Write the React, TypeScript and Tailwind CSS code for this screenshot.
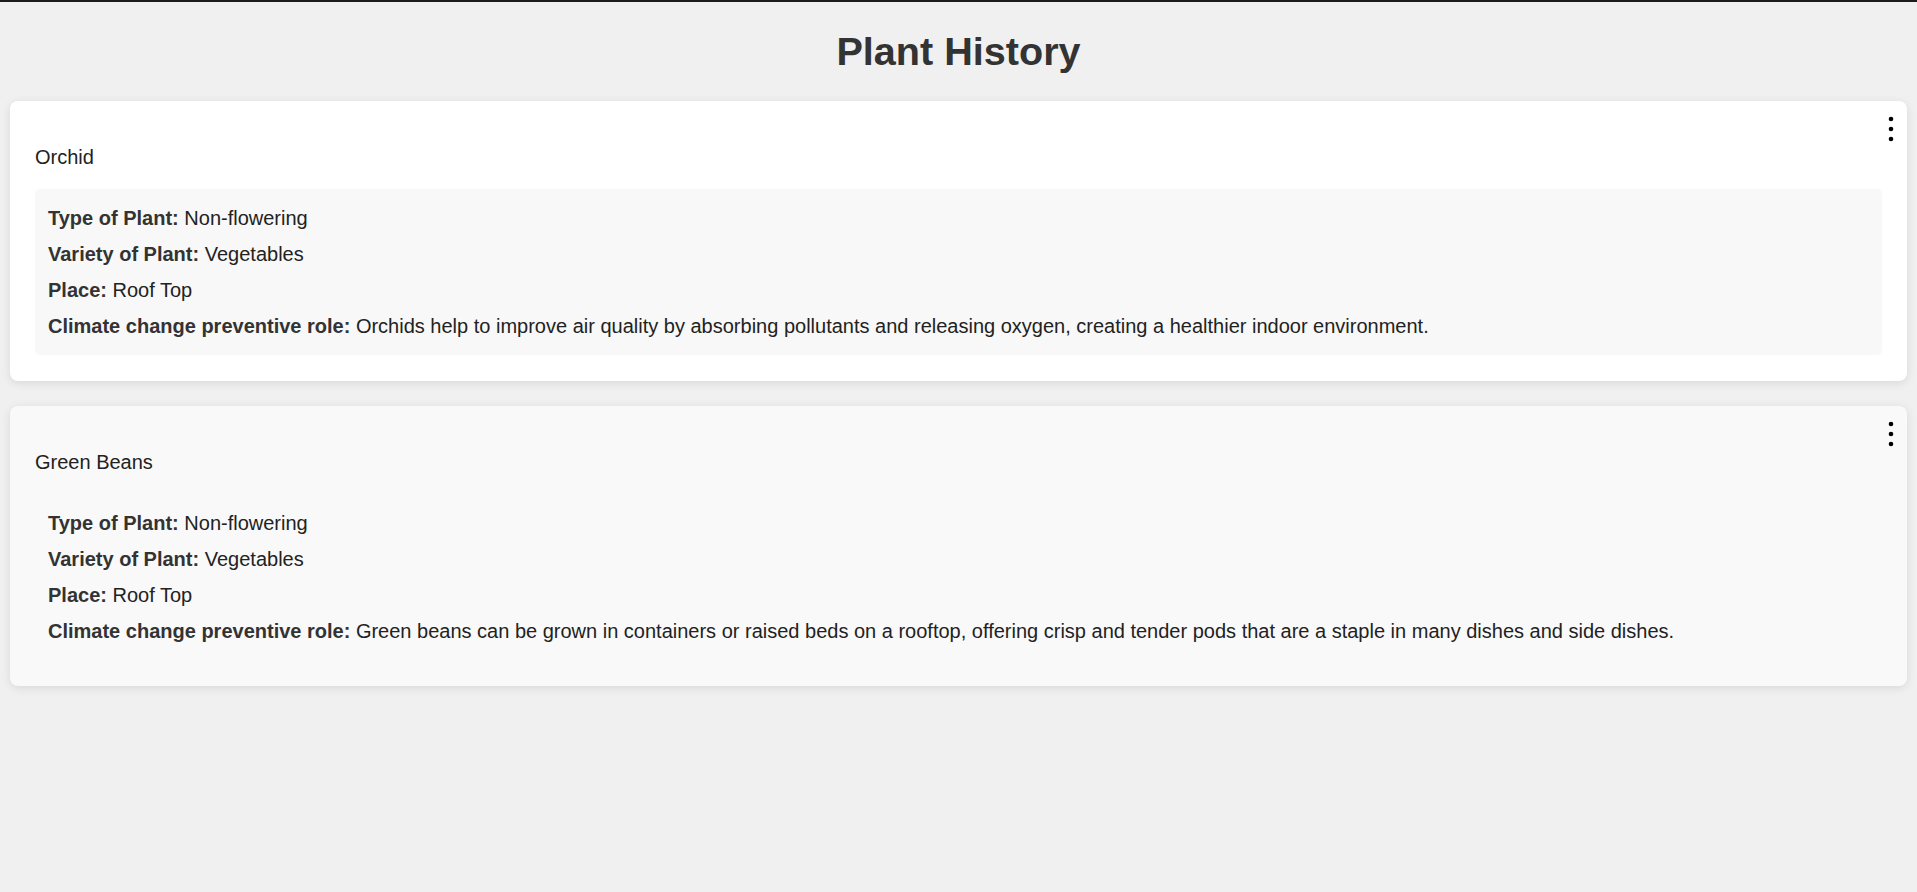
import React from "react";

type Plant = {
  id: number;
  name: string;
  type: string;
  variety: string;
  place: string;
  role: string;
};

const plants: Plant[] = [
  {
    id: 1,
    name: "Orchid",
    type: "Non-flowering",
    variety: "Vegetables",
    place: "Roof Top",
    role: "Orchids help to improve air quality by absorbing pollutants and releasing oxygen, creating a healthier indoor environment.",
  },
  {
    id: 2,
    name: "Green Beans",
    type: "Non-flowering",
    variety: "Vegetables",
    place: "Roof Top",
    role: "Green beans can be grown in containers or raised beds on a rooftop, offering crisp and tender pods that are a staple in many dishes and side dishes.",
  },
];

function MoreDots() {
  return (
    <svg
      width="10"
      height="30"
      viewBox="0 0 10 30"
      className="absolute right-[11px] top-[13px] cursor-pointer"
    >
      <circle cx="5" cy="5" r="2.3" fill="#000" />
      <circle cx="5" cy="15" r="2.3" fill="#000" />
      <circle cx="5" cy="25" r="2.3" fill="#000" />
    </svg>
  );
}

function PlantCard({ plant, hovered }: { plant: Plant; hovered?: boolean }) {
  const rows = [
    { label: "Type of Plant:", value: plant.type },
    { label: "Variety of Plant:", value: plant.variety },
    { label: "Place:", value: plant.place },
    { label: "Climate change preventive role:", value: plant.role },
  ];
  return (
    <div
      className={
        hovered
          ? "relative rounded-lg bg-[#f9f9f9] px-[25px] pt-[45px] pb-[26px] shadow-[0_2px_10px_rgba(0,0,0,0.1)]"
          : "relative rounded-lg bg-white px-[25px] pt-[45px] pb-[26px] shadow-[0_2px_10px_rgba(0,0,0,0.1)]"
      }
    >
      <MoreDots />
      <h3 className="text-[20px] leading-[22px] font-normal text-[#222]">
        {plant.name}
      </h3>
      <div
        className={
          hovered
            ? "mt-[21px] rounded-[5px] bg-[#f9f9f9] px-[13px] py-[11px]"
            : "mt-[21px] rounded-[5px] bg-[#f8f8f8] px-[13px] py-[11px]"
        }
      >
        {rows.map((row) => (
          <p key={row.label} className="text-[20px] leading-[36px] text-[#222]">
            <strong className="font-bold text-[#333]">{row.label}</strong>{" "}
            {row.value}
          </p>
        ))}
      </div>
    </div>
  );
}

export default function App() {
  return (
    <div
      className="min-h-screen border-t-2 border-[#1c1c1c] bg-[#f0f0f0] px-[10px]"
      style={{ fontFamily: '"Liberation Sans", Arial, sans-serif' }}
    >
      <h1 className="pt-[27px] text-center text-[39.6px] leading-[44px] font-bold text-[#333]">
        Plant History
      </h1>
      <div className="mt-[28px] flex flex-col gap-[25px]">
        {plants.map((plant, index) => (
          <PlantCard key={plant.id} plant={plant} hovered={index === 1} />
        ))}
      </div>
    </div>
  );
}
